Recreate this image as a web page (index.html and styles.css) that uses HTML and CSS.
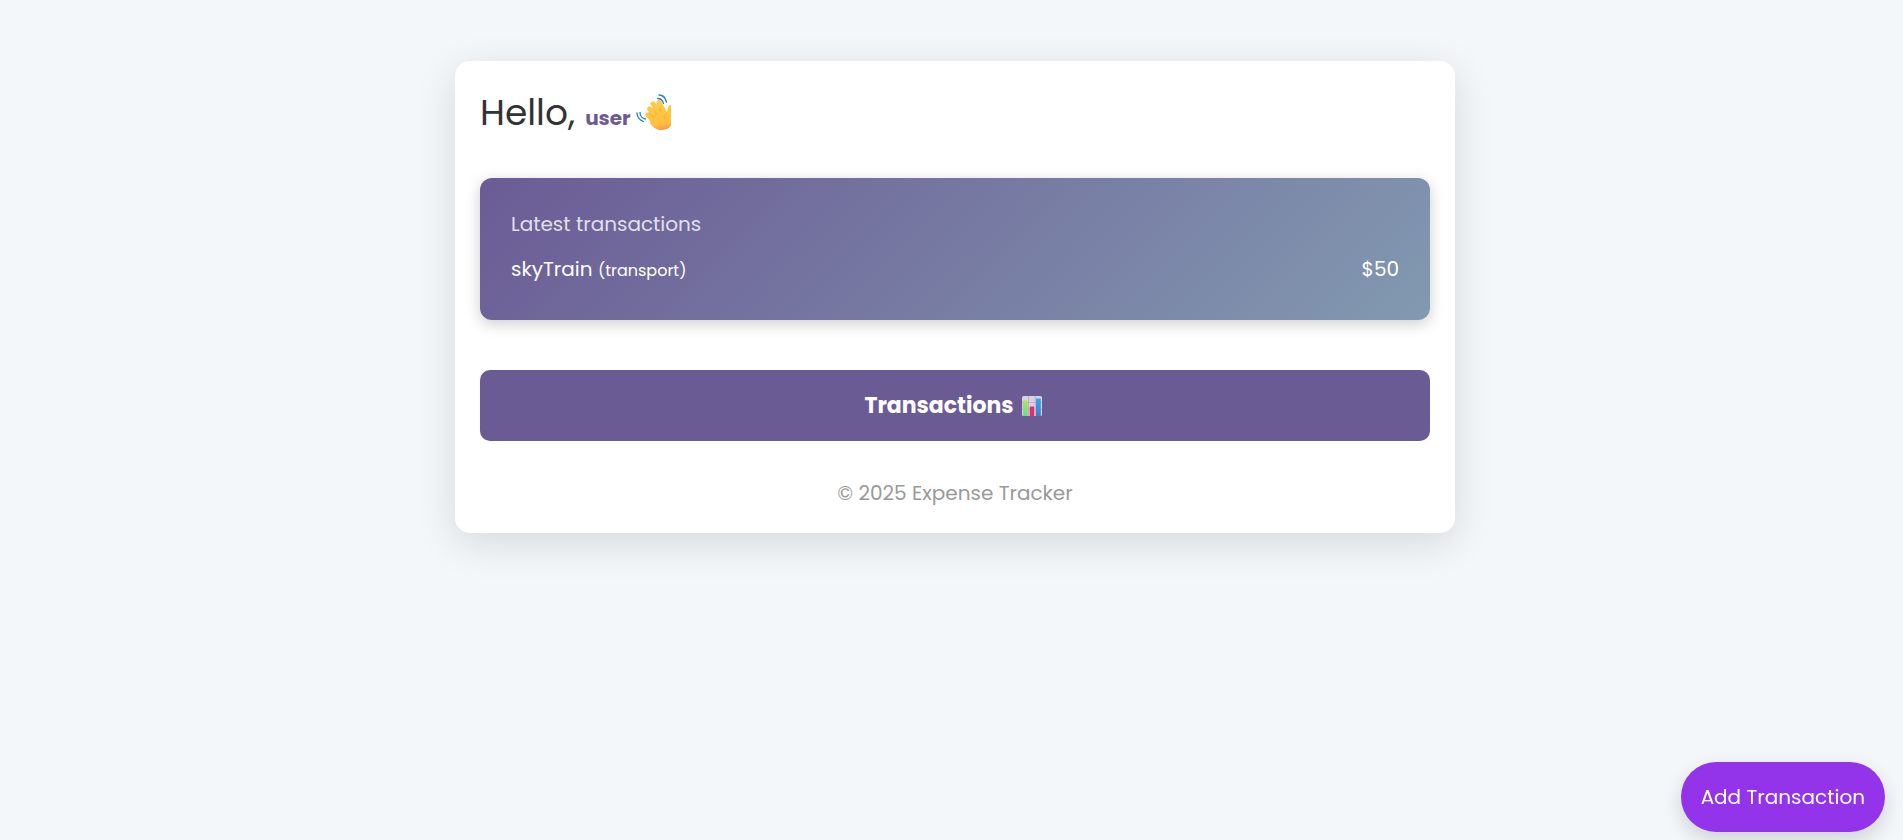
FILE: index.html
```
<!DOCTYPE html>
<html lang="en">
<head>
    <meta charset="UTF-8">
    <meta name="viewport" content="width=device-width, initial-scale=1.0">
    <title>Expense Tracker</title>
    <link rel="stylesheet" href="styles.css">
</head>
<body>

    <main class="container">
        <!-- Greeting -->
        <header class="header">
            <h1 class="greeting">Hello, <span class="username">user</span>
                <svg class="wave" viewBox="0 0 35 36" aria-hidden="true">
                    <defs>
                        <linearGradient id="skin" gradientUnits="userSpaceOnUse" x1="18" y1="6" x2="24" y2="37">
                            <stop offset="0" stop-color="#ffcd48"/>
                            <stop offset="0.8" stop-color="#ffbf3e"/>
                            <stop offset="1" stop-color="#f3924f"/>
                        </linearGradient>
                    </defs>
                    <g fill="none" stroke="#2581c4" stroke-width="1.3" stroke-linecap="round">
                        <path d="M21.500 4.500c3 0 5 1.500 6 5"/>
                        <path d="M23 1c4 0 6.500 3 7.500 7"/>
                        <path d="M4 18.500c0 3 2 6 5.500 6.500"/>
                        <path d="M1 19c0 4 3 7.500 6.500 8.500"/>
                    </g>
                    <!-- Fingers, thumb and palm -->
                    <g fill="none" stroke="url(#skin)" stroke-width="5" stroke-linecap="round">
                        <path d="M11.800 20.800l8 8.500"/>
                        <path d="M13.500 15l9 11"/>
                        <path d="M17 9.800l8 13"/>
                        <path d="M23 8.500l6.500 12"/>
                        <path stroke-width="6" d="M35 14c-1 4-1.500 7-2.500 10"/>
                    </g>
                    <path fill="url(#skin)" d="M13 22l2.500-5 12-3.500 3 5.500 5-1v13c-2 3.500-6 5-10.500 5-4.500 0-8-2.500-10.500-6.500z"/>
                    <path fill="none" stroke="#f0a630" stroke-width="0.700" stroke-linecap="round" d="M13.200 18.500l4.500 5M16.200 14l5 6.500M21 10.500l4 7M30.500 18.500c-2 1.500-3 3.500-2 6"/>
                </svg>
            </h1>
        </header>

        <!-- Latest transactions -->
        <section class="latest">
            <h2 class="latest-title">Latest transactions</h2>
            <ul class="latest-list">
                <li class="latest-item">
                    <span>skyTrain <small class="category">(transport)</small></span>
                    <span>$50</span>
                </li>
            </ul>
        </section>

        <button type="button" class="transactions-btn">
            Transactions
            <svg class="chart" viewBox="0 0 20 20" aria-hidden="true">
                <defs>
                    <linearGradient id="green" x1="0" y1="0" x2="0" y2="1">
                        <stop offset="0" stop-color="#b4e34c"/>
                        <stop offset="1" stop-color="#5fe08e"/>
                    </linearGradient>
                    <linearGradient id="blue" x1="0" y1="0" x2="0" y2="1">
                        <stop offset="0" stop-color="#32a8f0"/>
                        <stop offset="1" stop-color="#3f7bcf"/>
                    </linearGradient>
                </defs>
                <rect width="20" height="20" rx="1.500" fill="#d9d2e2"/>
                <path d="M6.500 0v20M13.300 0v20M0 6.500h20M0 13.300h20" stroke="#b5aac4" stroke-width="0.800"/>
                <rect x="1" y="4.500" width="4.700" height="15.500" rx="0.600" fill="url(#green)"/>
                <rect x="7.700" y="10.500" width="4.500" height="9.500" rx="0.600" fill="#e52d6c"/>
                <rect x="14" y="2.500" width="4.800" height="17.500" rx="0.600" fill="url(#blue)"/>
            </svg>
        </button>

        <footer class="footer">&copy; 2025 Expense Tracker</footer>
    </main>

    <button type="button" class="add-btn">Add Transaction</button>

</body>
</html>
```
FILE: styles.css
```
* {
    box-sizing: border-box;
    margin: 0;
    padding: 0;
}

body {
    font-family: Poppins, Inter, "Open Sans", sans-serif;
    font-size: 20px;
    line-height: 30px;
    color: #333;
    background-color: #f3f7fa;
    padding: 61px 0 61px 7px;
}

.container {
    max-width: 1000px;
    margin: 0 auto;
    padding: 25px;
    background-color: #fff;
    border-radius: 15px;
    box-shadow: 0 10px 40px rgba(0, 0, 0, 0.12);
}

.header {
    margin-bottom: 38px;
}

.greeting {
    display: flex;
    align-items: baseline;
    gap: 10px;
    font-size: 36px;
    font-weight: 400;
    line-height: 54px;
}

.username {
    font-size: 20px;
    font-weight: 700;
    line-height: 30px;
    color: #6b5b95;
}

.wave {
    width: 35px;
    height: 36px;
    margin: 0 0 2px -5px;
    align-self: center;
}

.latest {
    padding: 31px;
    color: #fff;
    background: linear-gradient(135deg, #6b5b95, #8299b0);
    border-radius: 12px;
    box-shadow: 0 4px 15px rgba(0, 0, 0, 0.2);
}

.latest-title {
    margin-bottom: 15px;
    font-size: 20px;
    font-weight: 400;
    opacity: 0.8;
}

.latest-list {
    list-style: none;
}

.latest-item {
    display: flex;
    justify-content: space-between;
    margin-bottom: 3px;
}

.category {
    font-size: 16px;
}

.transactions-btn {
    display: flex;
    justify-content: center;
    align-items: center;
    gap: 8px;
    width: 100%;
    margin-top: 50px;
    padding: 20px;
    font: inherit;
    font-size: 22px;
    font-weight: 700;
    line-height: 31px;
    color: #fff;
    background-color: #6b5b95;
    border: none;
    border-radius: 10px;
    cursor: pointer;
}

.chart {
    width: 20px;
    height: 20px;
    margin-right: 4px;
}

.footer {
    margin-top: 37px;
    text-align: center;
    color: #999;
}

.add-btn {
    position: fixed;
    right: 18px;
    bottom: 8px;
    padding: 20px;
    font: inherit;
    color: #fff;
    background-color: #9333ea;
    border: none;
    border-radius: 35px;
    box-shadow: 0 8px 20px rgba(0, 0, 0, 0.15);
    cursor: pointer;
}
```
